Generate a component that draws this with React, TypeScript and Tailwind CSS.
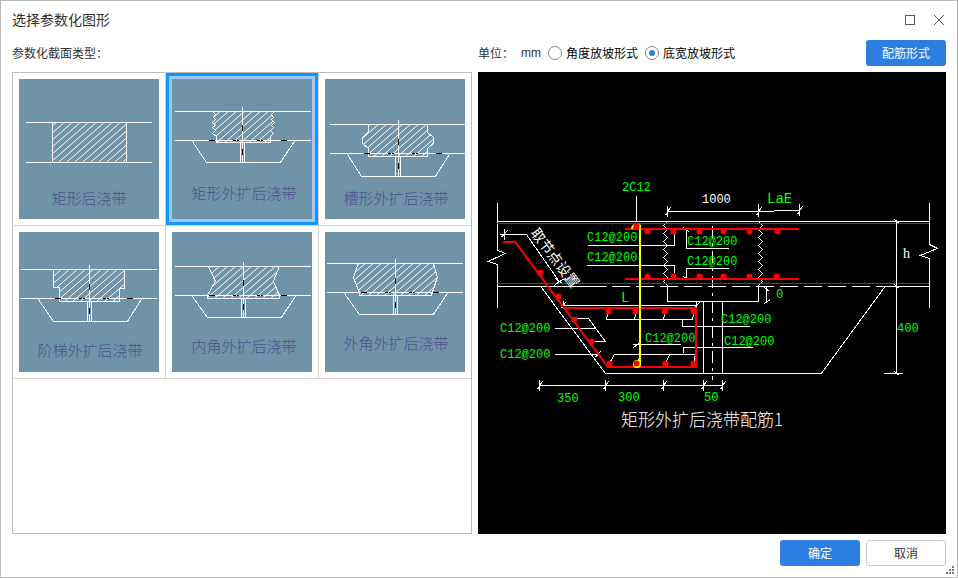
import React, { useState } from 'react'
import { clsx } from 'clsx'

type Point = [number, number]

interface Section {
  id: string
  label: string
  labelX: number
  labelY: number
  top: number
  mid: number
  bottom: number
  lineX: Point
  outline: Point[]
  hatchX: number
  // everything below only exists on the widened types
  axis?: number
  stem?: Point
  trench?: [number, number, number, number]
  dashX?: number
  dashY?: number
}

const SECTIONS: Section[] = [
  {
    id: 'rect',
    label: '矩形后浇带',
    labelX: 70,
    labelY: 125,
    top: 43,
    mid: 83,
    bottom: 83,
    lineX: [7, 133],
    outline: [[33, 43], [33, 83], [107, 83], [107, 43]],
    hatchX: 45,
  },
  {
    id: 'rect-wide',
    label: '矩形外扩后浇带',
    labelX: 72,
    labelY: 120,
    top: 32,
    mid: 61,
    bottom: 83,
    lineX: [3, 139],
    outline: [
      [40, 32], [43, 35], [41, 38], [43, 40], [40, 43], [43, 46], [40, 48], [43, 51], [40, 54], [44, 57], [44, 63],
      [98, 63], [98, 57], [101, 54], [98, 51], [101, 48], [99, 46], [102, 43], [99, 40], [101, 38], [99, 35], [102, 32],
    ],
    hatchX: 48,
    axis: 70,
    stem: [68, 72],
    trench: [20, 34, 108, 122],
    dashX: 37,
    dashY: 46,
  },
  {
    id: 'groove-wide',
    label: '槽形外扩后浇带',
    labelX: 71,
    labelY: 125,
    top: 45,
    mid: 74,
    bottom: 97,
    lineX: [5, 140],
    outline: [
      [43, 45], [43, 53], [37, 58], [37, 64], [43, 69], [43, 77],
      [102, 77], [102, 69], [108, 64], [108, 58], [102, 53], [102, 45],
    ],
    hatchX: 53,
    axis: 73,
    stem: [70, 75],
    trench: [22, 36, 110, 124],
    dashX: 39,
    dashY: 60,
  },
  {
    id: 'step-wide',
    label: '阶梯外扩后浇带',
    labelX: 71,
    labelY: 124,
    top: 37,
    mid: 66,
    bottom: 89,
    lineX: [2, 138],
    outline: [[34, 37], [34, 55], [40, 55], [40, 69], [100, 69], [100, 56], [105, 56], [105, 37]],
    hatchX: 42,
    axis: 70,
    stem: [68, 72],
    trench: [19, 34, 108, 122],
    dashX: 36,
    dashY: 52,
  },
  {
    id: 'inner-wide',
    label: '内角外扩后浇带',
    labelX: 72,
    labelY: 120,
    top: 34,
    mid: 63,
    bottom: 85,
    lineX: [3, 139],
    outline: [[36, 34], [43, 49], [35, 63], [35, 66], [107, 66], [107, 63], [101, 49], [107, 34]],
    hatchX: 47,
    axis: 71,
    stem: [69, 73],
    trench: [20, 35, 109, 123],
    dashX: 37,
    dashY: 48,
  },
  {
    id: 'outer-wide',
    label: '外角外扩后浇带',
    labelX: 71,
    labelY: 117,
    top: 31,
    mid: 60,
    bottom: 82,
    lineX: [2, 138],
    outline: [[33, 31], [28, 45], [34, 60], [34, 63], [106, 63], [107, 60], [112, 45], [108, 31]],
    hatchX: 40,
    axis: 70,
    stem: [68, 72],
    trench: [19, 34, 108, 122],
    dashX: 36,
    dashY: 46,
  },
]

const HATCH = Array.from({ length: 22 }, (_, i) => (i - 6) * 8)

const toPoints = (pts: Point[]) => pts.map((p) => p.join(',')).join(' ')

function SectionDrawing({ section }: { section: Section }) {
  const { id, top, mid, bottom, lineX, outline, hatchX, axis, stem, trench, dashX, dashY } = section

  return (
    <svg viewBox="0 0 140 140" className="block w-full bg-[#6f93a9]" aria-hidden="true">
      <clipPath id={`clip-${id}`}>
        <polygon points={toPoints(outline)} />
      </clipPath>
      <g transform="translate(.4 .4)" stroke="#fff" fill="none" shapeRendering="crispEdges">
        <g clipPath={`url(#clip-${id})`} shapeRendering="geometricPrecision">
          {HATCH.map((dx) => (
            <path key={dx} d={`M${hatchX + dx} ${top}l-46 40`} />
          ))}
        </g>
        <polyline points={toPoints(outline)} />
        <path d={`M${lineX[0]} ${top}H${lineX[1]}M${lineX[0]} ${mid}H${lineX[1]}`} />
        {trench && stem && (
          <>
            <path d={`M${trench[0]} ${mid + 1}L${trench[1]} ${bottom}H${trench[2]}L${trench[3]} ${mid + 1}`} />
            <path d={`M${stem[0]} ${mid + 3}V${bottom}M${stem[1]} ${mid + 3}V${bottom}`} />
            <path d={`M${axis} ${top - 4}V${bottom + 1}`} />
            <path
              stroke="#000"
              d={`M${dashX} ${mid}h6m18 0h3m1 0h2m18 0h3m1 0h2m18 0h6M${axis} ${dashY}v6m0 18v6`}
            />
          </>
        )}
      </g>
      <text
        x={section.labelX}
        y={section.labelY}
        textAnchor="middle"
        className="fill-[#4d528f] font-['Noto_Sans_CJK_SC',sans-serif] text-[15px] font-light"
      >
        {section.label}
      </text>
    </svg>
  )
}

const REBARS: Point[] = [
  [169, 159], [195, 159], [221, 159], [245, 159], [271, 159], [299, 159],
  [169, 204], [195, 204], [221, 204], [245, 204], [271, 204], [298, 204],
  [62, 200], [80, 224], [96, 247], [113, 269],
  [130, 239], [157, 239], [186, 239], [215, 239],
  [131, 291], [158, 291], [187, 291], [215, 291],
  [158, 153],
]

const NOTES: { x: number; y: number; text: string }[] = [
  { x: 144, y: 119, text: '2C12' },
  { x: 109, y: 169, text: 'C12@200' },
  { x: 109, y: 189, text: 'C12@200' },
  { x: 209, y: 173, text: 'C12@200' },
  { x: 209, y: 193, text: 'C12@200' },
  { x: 22, y: 260, text: 'C12@200' },
  { x: 22, y: 286, text: 'C12@200' },
  { x: 167, y: 270, text: 'C12@200' },
  { x: 243, y: 251, text: 'C12@200' },
  { x: 246, y: 273, text: 'C12@200' },
  { x: 79, y: 330, text: '350' },
  { x: 140, y: 329, text: '300' },
  { x: 226, y: 329, text: '50' },
  { x: 298, y: 226, text: '0' },
  { x: 419, y: 260, text: '400' },
]

// saw-tooth edges of the cast strip
const TEETH = Array.from({ length: 8 }, () => 'l4 4l-4 4').join('')
const TEETH_LEFT = Array.from({ length: 8 }, () => 'l-4 4l4 4').join('')

function Tick({ x, y }: { x: number; y: number }) {
  return <path d={`M${x} ${y - 5}V${y + 6}M${x - 2} ${y + 4}l5 -8`} />
}

function DetailDrawing() {
  return (
    <svg viewBox="0 0 468 462" className="block w-full" role="img" aria-label="矩形外扩后浇带配筋1">
      <g transform="translate(.4 .4)" fill="none" stroke="#fff" shapeRendering="crispEdges">
        {/* slab */}
        <path d="M19 131V178L27 181L10 189L19 192V236" />
        <path d="M451 131V172L459 176L442 183L451 186V236" />
        <path d="M19 149H451M19 214H129M398 214H451" />
        <path d="M134 214H398" strokeDasharray="18 6" />
        <path d="M63 215L127 301H343L406 215" />
        <path d={`M189 149${TEETH_LEFT}`} />
        <path d={`M280 149${TEETH}`} />
        <path d="M189 213V229H280V213M225 229V301M244 229V301" />
        <path d="M234 154V308" strokeDasharray="12 5 3 5" />
        <path stroke="#f00" d="M19 151H451M19 211H451" />

        {/* dimensions */}
        <path d="M189 139H280L321 138M61 313H245M418 149V301M406 301H425M85 233H218M288 214V229" />
        <path d="M280 132V144M321 132V144M416 147l5 4M416 212l5 4M416 299l5 4M286 215l5 4M286 231l6 -4M218 229v8" />
        <Tick x={189} y={139} />
        <Tick x={280} y={139} />
        <Tick x={321} y={138} />
        <Tick x={61} y={313} />
        <Tick x={127} y={313} />
        <Tick x={185} y={313} />
        <Tick x={225} y={313} />
        <Tick x={244} y={313} />
        <path d="M85 229v8M83 236l4 -6M216 235l5 -5" />

        {/* leaders */}
        <path d="M158 124V150" />
        <path d="M22 162H48L80 208M26 157V168M23 165l6 -7M75 214L82 208L88 206M77 206l7 5" />
        <path d="M110 173H196V161M109 193H196V201" />
        <path d="M251 176H208V157M205 155l6 5M251 196H208V207M205 204l5 4" />
        <path d="M77 256H118M96 246H110L127 269H117M77 282H120M117 285l5 -6" />
        <path d="M130 240L128 247H214L216 240M158 240l-2 7M187 240l-2 7" />
        <path d="M131 291L136 282H217L215 291M159 291l3 -8M187 291l4 -8" />
        <path d="M272 254H204V248M275 275H205V281M155 272H203M155 275l7 -5" />
      </g>

      {/* reinforcement */}
      <g fill="none" stroke="#f00" strokeWidth="2">
        <path d="M147 157H321M147 207H321M25 170H37L130 295H218V236H87" />
        <path stroke="#ff0" d="M162 153V293M154 157a5 5 0 0 1 8 -4" />
        <circle cx="159" cy="292" r="3" stroke="#ff0" />
        <g fill="#f00" stroke="none">
          {REBARS.map(([x, y]) => (
            <circle key={`${x}-${y}`} cx={x + 0.5} cy={y + 0.5} r="3" />
          ))}
        </g>
      </g>

      <g className="fill-[#00ff00] font-['Liberation_Mono',monospace] text-[12px]">
        {NOTES.map((n) => (
          <text key={`${n.x}-${n.y}`} x={n.x} y={n.y}>
            {n.text}
          </text>
        ))}
        <text x="289" y="131" className="text-[14px]">LaE</text>
        <text x="143" y="230" className="text-[14px]">L</text>
      </g>
      <g className="fill-white">
        <text x="224" y="131" className="font-['Liberation_Mono',monospace] text-[12px]">1000</text>
        <text x="425" y="186" className="font-['Liberation_Serif',serif] text-[14px]">h</text>
        <text
          transform="translate(52 161) rotate(53)"
          className="font-['Noto_Sans_CJK_SC',sans-serif] text-[14px]"
        >
          取节点设置
        </text>
        <text x="143" y="354" className="font-['Noto_Sans_CJK_SC',sans-serif] text-[17px] font-light">
          矩形外扩后浇带配筋1
        </text>
      </g>
    </svg>
  )
}

interface SlopeRadioProps {
  label: string
  value: string
  current: string
  onChange: (value: string) => void
}

function SlopeRadio({ label, value, current, onChange }: SlopeRadioProps) {
  return (
    <label className="flex items-center gap-1 text-black">
      <input
        type="radio"
        name="slope"
        value={value}
        checked={current === value}
        onChange={() => onChange(value)}
        className="h-[14px] w-[14px] appearance-none rounded-full border border-[#888] bg-white p-[3px] before:block before:h-full before:w-full before:rounded-full checked:before:bg-[#2c7fe0]"
      />
      {label}
    </label>
  )
}

function ResizeGrip() {
  return (
    <svg width="10" height="10" viewBox="0 0 10 10" className="absolute right-px bottom-px fill-[#777]" aria-hidden="true">
      <path d="M6 0h2v2h-2zM3 3h2v2h-2zM6 3h2v2h-2zM0 6h2v2h-2zM3 6h2v2h-2zM6 6h2v2h-2z" />
    </svg>
  )
}

export default function App() {
  const [selected, setSelected] = useState('rect-wide')
  const [slope, setSlope] = useState('width')

  return (
    <div className="relative flex min-h-screen flex-col border border-[#bbb] bg-white px-[11px] pb-[11px] font-['Noto_Sans_CJK_SC',sans-serif] text-[12px] text-[#333]">
      <header className="flex h-[39px] items-center justify-between pb-0.5">
        <h1 className="text-[14px]">选择参数化图形</h1>
        <div className="flex items-center gap-4">
          <button type="button" aria-label="最大化" className="flex">
            <svg width="12" height="12" viewBox="0 0 12 12" fill="none" stroke="#555" shapeRendering="crispEdges">
              <rect x="1.5" y="1.5" width="9" height="9" />
            </svg>
          </button>
          <button type="button" aria-label="关闭" className="flex">
            <svg width="14" height="12" viewBox="0 0 14 12" fill="none" stroke="#555">
              <path d="M2 1l10 10M12 1L2 11" />
            </svg>
          </button>
        </div>
      </header>

      <main className="flex flex-1 gap-[6px]">
        <section className="flex w-[460px] shrink-0 flex-col gap-[6px]">
          <h2 className="flex h-[26px] items-center">参数化截面类型：</h2>
          <div className="flex-1 overflow-hidden border border-[#bbb]">
            <div className="grid grid-cols-[repeat(3,153px)]">
              {SECTIONS.map((s) => (
                <div key={s.id} className="border-r border-b border-[#d4d4d4]">
                  <button
                    type="button"
                    aria-label={s.label}
                    aria-pressed={selected === s.id}
                    onClick={() => setSelected(s.id)}
                    className={clsx(
                      'block w-full border-[3px] p-[3px]',
                      selected === s.id ? 'border-[#0f96ff] bg-[#9cc8fa]' : 'border-transparent'
                    )}
                  >
                    <SectionDrawing section={s} />
                  </button>
                </div>
              ))}
            </div>
          </div>
        </section>

        <section className="flex min-w-0 flex-1 flex-col gap-[6px]">
          <div className="flex h-[26px] items-center justify-between">
            <div className="flex items-center gap-[7px]">
              <span>单位：</span>
              <span className="font-['Liberation_Sans',sans-serif]">mm</span>
              <SlopeRadio label="角度放坡形式" value="angle" current={slope} onChange={setSlope} />
              <SlopeRadio label="底宽放坡形式" value="width" current={slope} onChange={setSlope} />
            </div>
            <button type="button" className="h-[26px] w-20 rounded-[3px] bg-[#2c7fe0] text-white">
              配筋形式
            </button>
          </div>
          <div className="flex-1 bg-black">
            <DetailDrawing />
          </div>
        </section>
      </main>

      <footer className="mt-[6px] flex justify-end gap-[6px]">
        <button type="button" className="h-[26px] w-20 rounded-[3px] bg-[#2c7fe0] text-white">
          确定
        </button>
        <button type="button" className="h-[26px] w-20 rounded-[3px] border border-[#c8c8c8] bg-white">
          取消
        </button>
      </footer>
      <ResizeGrip />
    </div>
  )
}
